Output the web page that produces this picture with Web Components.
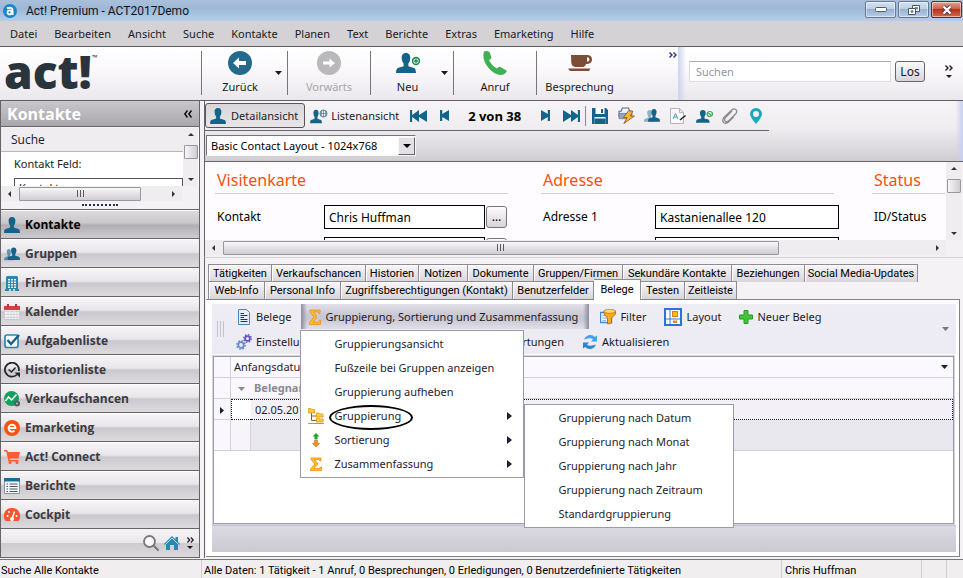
<!DOCTYPE html>
<html lang="de">
<head>
<meta charset="utf-8">
<title>Act! Premium - ACT2017Demo</title>
<style>
html, body { height: 100%; }
body { margin: 0; font: 11px/16px "Noto Sans", sans-serif; color: #1a1a22; background: #f4f2f5; overflow: hidden; }
</style>
</head>
<body>
<act-window></act-window>
<script>
const P = '<path fill="#13638a" d="M8 0C5.400 0 4.400 2 4.600 4.200 4.800 6.500 5.300 7.500 6.100 8.400V10.500L1.500 12C.6 12.300 .2 13.300 0 16H16C15.800 13.300 15.400 12.300 14.500 12L9.900 10.500V8.400C10.700 7.500 11.200 6.500 11.400 4.200 11.600 2 10.600 0 8 0Z"/>';
const ICONS = {
  app: ['0 0 14 14', '<circle cx="7" cy="7" r="7" fill="#1b86c4"/><circle cx="6.500" cy="8.400" r="2" fill="none" stroke="#fff" stroke-width="1.800"/><path d="M4 4.300Q9.500 2.600 9.500 6.500V11" fill="none" stroke="#fff" stroke-width="2"/>'],
  person: ['0 0 16 16', P],
  back: ['0 0 24 24', '<circle cx="12" cy="12" r="12" fill="#236a8b"/><path d="M5 12L11 6.500V10H18V14H11V17.500Z" fill="#fff"/>'],
  forward: ['0 0 24 24', '<circle cx="12" cy="12" r="12" fill="#b9b8ba"/><path d="M18 12L12.500 7.500V10.500H6V13.500H12.500V16.500Z" fill="#fff"/>'],
  neu: ['0 0 24 20', '<g transform="scale(1.25)">' + P + '</g><circle cx="20" cy="8" r="3.400" fill="#fff" stroke="#1c8e57" stroke-width="1.600"/><path d="M20 6V10M18 8H22" stroke="#1c8e57" stroke-width="1.400"/>'],
  phone: ['0 0 24 24', '<path fill="#3fb054" d="M1 0.500Q4-.5 6.500 1L8.500 6.500Q8.300 8 6 9Q8 14 14 17.500Q15.500 15.500 17 15.700L23.500 19.500Q24.500 21.500 20.500 23.500Q13 25.500 6 17.500Q-1.500 9 1 .5Z"/>'],
  cup: ['0 0 24 20', '<path fill="#7b4e35" d="M3 1H19Q24 1 24 6Q24 11 18 11Q17 14.500 14 14.500H8Q4 14.500 3.300 10ZM19 3.500V8.500Q21.500 8.500 21.500 6Q21.500 3.500 19 3.500ZM0 16H22.500L21 19H2Z" fill-rule="evenodd"/>'],
  more: ['0 0 8 6', '<path d="M0.500 .5L3 3L.5 5.500M4.500 .5L7 3L4.500 5.500" fill="none" stroke="currentColor" stroke-width="1.400"/>'],
  less: ['0 0 8 8', '<path d="M3.500 .5L.8 4L3.500 7.500M7.500 .5L4.800 4L7.500 7.500" fill="none" stroke="currentColor" stroke-width="1.300"/>'],
  down: ['0 0 8 4', '<path d="M0 0H8L4 4Z" fill="currentColor"/>'],
  up: ['0 0 8 4', '<path d="M0 4H8L4 0Z" fill="currentColor"/>'],
  right: ['0 0 4 8', '<path d="M0 0V8L4 4Z" fill="currentColor"/>'],
  left: ['0 0 4 8', '<path d="M4 0V8L0 4Z" fill="currentColor"/>'],
  list: ['0 0 18 16', '<g transform="scale(.75 .85) translate(0 2)">' + P + '</g><circle cx="13.500" cy="5.500" r="3.500" fill="#e9eef2" stroke="#5f7f90"/><path d="M10 5.500H17M13.500 2V9M11.500 3V8M15.500 3V8" stroke="#5f7f90" stroke-width=".7"/>'],
  first: ['0 0 16 12', '<path fill="#13638a" d="M0 0H2V5L8.500 0V5L16 0V12L8.500 7V12L2 7V12H0Z"/>'],
  prev: ['0 0 8 11', '<path fill="#13638a" d="M0 0H2V4L8 0V11L2 7V11H0Z"/>'],
  next: ['0 0 8 11', '<path fill="#13638a" d="M8 0H6V4L0 0V11L6 7V11H8Z"/>'],
  last: ['0 0 16 12', '<path fill="#13638a" d="M16 0H14V5L7.500 0V5L0 0V12L7.500 7V12L14 7V12H16Z"/>'],
  save: ['0 0 16 16', '<path fill="#13638a" d="M0 0H14L16 2V16H0Z"/><path fill="#fff" d="M3.500 0H12.500V6H3.500ZM2.500 9H13.500V16H2.500Z"/><path fill="#13638a" d="M9 1H11V5H9ZM2.500 10.500H13.500V16H2.500Z"/>'],
  quick: ['0 0 16 16', '<path d="M4 1H10L11 4H13V9H1V4H3Z" fill="#eef2fa" stroke="#54688f"/><path d="M1 6H10V11H1Z" fill="#93a4c4" stroke="#54688f" stroke-width=".6"/><path d="M10 3.500L5 10H8.500L5.500 15.500L15.500 8.500H11.500L14 4Z" fill="#f9b636" stroke="#8a5b16" stroke-width=".8"/>'],
  people: ['0 0 16 14', '<g opacity=".45" transform="translate(0 1) scale(.7 .8)">' + P + '</g><g transform="translate(4 0) scale(.75 .85)">' + P + '</g>'],
  note: ['0 0 16 16', '<path d="M.5 .5H9.500L13.500 4.500V15.500H.5ZM9.500 .5V4.500H13.500" fill="#fafafc" stroke="#b3b3b8"/><path d="M3 11L5.500 5.500L8 11M4 9H7" stroke="#4f98c2" fill="none"/><path d="M10 12L15.500 7.500" stroke="#222" stroke-width="1.600"/>'],
  call: ['0 0 16 14', '<g transform="translate(0 1) scale(.8)">' + P + '</g><circle cx="13" cy="5" r="2.500" fill="#fff" stroke="#35a84c" stroke-width="1.200"/><path d="M11.500 4L14.500 6.500" stroke="#35a84c"/>'],
  clip: ['0 0 16 16', '<path d="M10 3L3.500 9.500Q1.800 12 3.300 13.300Q5 14.500 7 12.500L14 5.500Q15.500 3 13.700 1.600Q12-.1 9.700 2L2 9.500Q-.3 12.500 1.600 14.500Q4 16.300 6.500 14L12 8.500" fill="none" stroke="#8b8a8e" stroke-width="1.300"/>'],
  pin: ['0 0 12 16', '<path fill="#18aab8" fill-rule="evenodd" d="M6 0A6 6 0 0 1 12 6Q12 9 6 16Q0 9 0 6A6 6 0 0 1 6 0ZM6 3A3 3 0 1 0 6 9A3 3 0 0 0 6 3Z"/>'],
  groups: ['0 0 16 16', '<g opacity=".6" transform="translate(0 3) scale(.6 .7)">' + P + '</g><g transform="translate(3.500 1.500) scale(.78)">' + P + '</g>'],
  firm: ['0 0 16 16', '<path fill="#2f86ab" d="M3 1H13L14 2V14H15V16H11V14H9V16H7V14H5V16H1V14H2V2Z"/><path d="M4 4H12V13H4Z" fill="#e8f2f7"/><path d="M4 6H12M4 8.500H12M4 11H12M6.500 4V13M9.500 4V13" stroke="#2f86ab"/>'],
  calendar: ['0 0 16 16', '<path fill="#f4f4f6" stroke="#c9c9cf" d="M.5 4H15.500V15.500H.5Z"/><path d="M1 7.500H15M1 10.500H15M1 13.500H15M4 5V15M7 5V15M10 5V15M13 5V15" stroke="#d3d3d8"/><path fill="#d23f44" d="M0 2H16V6H0Z"/><path fill="#b3333a" d="M3 0H5V3H3ZM11 0H13V3H11Z"/>'],
  task: ['0 0 16 16', '<rect x="1" y="2" width="13" height="12.500" rx="2" fill="#f5fafc" stroke="#2d85ae" stroke-width="1.700"/><path d="M3.500 7L7 11L15 2" fill="none" stroke="#12618a" stroke-width="2.400"/>'],
  history: ['0 0 16 16', '<path d="M13 12.500A7 7 0 1 1 14.800 9" fill="none" stroke="#26262a" stroke-width="1.800"/><path d="M10.500 10.500H16V15.500Z" fill="#26262a"/><path d="M4.500 7.500L7.500 10L11.500 5.500" fill="none" stroke="#26262a" stroke-width="1.500"/>'],
  chance: ['0 0 16 16', '<circle cx="7.500" cy="7.500" r="7.500" fill="#12a05a"/><path d="M1.500 10L4.500 6L7.500 9L12.500 3.500" fill="none" stroke="#fff" stroke-width="1.500"/><circle cx="13" cy="12.500" r="3" fill="#575b60"/><circle cx="13" cy="12.500" r="1" fill="#b9bcc0"/>'],
  emark: ['0 0 16 16', '<circle cx="8" cy="8" r="8" fill="#f9520f"/><path d="M4.500 8H11.500A3.500 3.500 0 1 0 10.500 10.700" fill="none" stroke="#fff" stroke-width="1.800"/>'],
  cart: ['0 0 16 14', '<path fill="#fb5c36" d="M0 0H3L4 2H16L14.500 8.500H5.500L5.800 10H14.500V11.500H4.500L2.200 1.500H0Z"/><circle cx="6" cy="12.500" r="1.500" fill="#fb5c36"/><circle cx="13" cy="12.500" r="1.500" fill="#fb5c36"/>'],
  report: ['0 0 16 16', '<path fill="#f6f9fb" stroke="#8a949c" d="M.5 1.500H15.500V15.500H.5Z"/><path fill="#1c6c98" d="M0 0H16V3.500H0Z"/><path d="M2.500 6H4M2.500 8.500H4M2.500 11H4M2.500 13.500H4M5.500 6H13.500M5.500 8.500H13.500M5.500 11H13.500M5.500 13.500H13.500" stroke="#50585f"/>'],
  gauge: ['0 0 16 14', '<path fill="#fb5530" d="M8 0A8 8 0 0 1 14.500 13H1.500A8 8 0 0 1 8 0Z"/><circle cx="3.500" cy="8" r="1" fill="#fff"/><circle cx="5" cy="4" r="1" fill="#fff"/><circle cx="12.500" cy="8" r="1" fill="#fff"/><path d="M8 11L10.500 3.500" stroke="#fff" stroke-width="1.400"/><circle cx="8" cy="11" r="2" fill="#fff"/>'],
  search: ['0 0 16 16', '<circle cx="6.500" cy="6.500" r="5.500" fill="#f8f8fa" stroke="#77777b" stroke-width="1.800"/><path d="M10.500 10.500L15.500 15.500" stroke="#77777b" stroke-width="2"/>'],
  home: ['0 0 16 14', '<path fill="#2b87ae" d="M8 0L11.500 3.500V1H14V6L16 8L15 9L14 8V14H10V9H6V14H2V8L1 9L0 8Z"/><path d="M1.500 8.500L8 2L14.500 8.500" fill="none" stroke="#e6f0f5" stroke-width=".8"/>'],
  doc: ['0 0 12 16', '<path d="M.5 .5H8.500L11.500 3.500V15.500H.5Z" fill="#e3f0fb" stroke="#4a84bd"/><path d="M2.500 4.500H6M2.500 6.500H9.500M2.500 8.500H6M2.500 10.500H9.500M2.500 12.500H9.500" stroke="#17375e"/>'],
  gears: ['0 0 16 16', '<circle cx="5" cy="11" r="2.800" fill="none" stroke="#5f8ed0" stroke-width="1.800"/><circle cx="5" cy="11" r="4.200" fill="none" stroke="#5f8ed0" stroke-width="1.500" stroke-dasharray="1.650 1.650"/><circle cx="11.500" cy="4.500" r="2.400" fill="none" stroke="#6657ba" stroke-width="1.800"/><circle cx="11.500" cy="4.500" r="3.700" fill="none" stroke="#6657ba" stroke-width="1.500" stroke-dasharray="1.450 1.450"/>'],
  sigma: ['0 0 12 14', '<path d="M1 1H11V4H10L9 2.500H4.500L8 7L4 11.500H9.500L10.500 10H11.500V13.500H.5V12L5 7L1 2.500Z" fill="#ffc21e" stroke="#f08a1c" stroke-width=".8"/>'],
  filter: ['0 0 16 16', '<path d="M.5 3.500H11.500V13.500H.5Z" fill="#f3f8ff" stroke="#4886d2" stroke-width="1.400"/><path d="M2.500 6.500H8M2.500 9H7M2.500 11.500H6" stroke="#8eb4e4"/><path d="M4 2V5L7.500 9V15L11.500 14V9L15.500 5V2Z" fill="#fbab1d" stroke="#a7630c" stroke-width=".8"/><ellipse cx="9.700" cy="2.300" rx="5.800" ry="2" fill="#ffd867" stroke="#a7630c" stroke-width=".6"/>'],
  layout: ['0 0 18 18', '<path d="M0 0H18V18H0Z" fill="#2b73d7"/><path d="M2 2H16V16H2Z" fill="#fff"/><path d="M6 2V16M2 11H16" stroke="#3379d9"/><rect x="8.500" y="3.500" width="5" height="5" fill="#ffbd19" stroke="#d8840f"/><rect x="9.500" y="13" width="3" height="1.500" fill="#ffbd19" stroke="#d8840f"/>'],
  plus: ['0 0 14 14', '<path d="M5 .5H9V5H13.500V9H9V13.500H5V9H.5V5H5Z" fill="#42c739" stroke="#249b27"/>'],
  refresh: ['0 0 16 16', '<path d="M2 5.500Q4 1 8.500 1Q11 1 12.800 3L15 1.500V7.500H9L11 5.300Q9.500 4 7.500 4.200Q4.500 4.500 2 5.500Z" fill="#41a4e8"/><path d="M14 10.500Q12 15 7.500 15Q5 15 3.200 13L1 14.500V8.500H7L5 10.700Q6.500 12 8.500 11.800Q11.500 11.500 14 10.500Z" fill="#2389d6"/>'],
  tree: ['0 0 16 16', '<path d="M3.500 5V12.500H9M3.500 8H9" fill="none" stroke="#7c642c"/><path d="M0 15.500H16" stroke="#9a9896"/><path d="M.5 .5H3L3.500 1.500H6.500V5H.5ZM8.500 5H11L11.500 6H15V9H8.500ZM8.500 10H11L11.500 11H15V14H8.500Z" fill="#ffce3c" stroke="#e6951c" stroke-width=".8"/>'],
  sort: ['0 0 8 14', '<path d="M4 0L7.500 3.500H5.500V6.500H2.500V3.500H.5Z" fill="#28a42a"/><path d="M4 14L7.500 10.500H5.500V7.500H2.500V10.500H.5Z" fill="#f4941d" stroke="#cf5a12" stroke-width=".6"/>'],
  min: ['0 0 12 6', '<rect x=".5" y=".5" width="11" height="4" rx="1" fill="#fff" stroke="#4c5b72"/>'],
  restore: ['0 0 12 10', '<path d="M4.500 .5H11.500V6.500H4.500Z" fill="#fff" stroke="#46556c"/><path d="M7 2.500H9.500V4H7Z" fill="#7f97b6" stroke="#46556c" stroke-width=".6"/><path d="M.5 3.500H7.500V9.500H.5Z" fill="#fff" stroke="#46556c"/><path d="M3 5.700H5V7.300H3Z" fill="#7f97b6" stroke="#46556c" stroke-width=".6"/>'],
  close: ['0 0 12 10', '<path d="M2.500 1.500L9.500 8.500M9.500 1.500L2.500 8.500" stroke="#4d3540" stroke-width="4"/><path d="M2.500 1.500L9.500 8.500M9.500 1.500L2.500 8.500" stroke="#fff" stroke-width="2.400"/>']
};

const RESET = `*{box-sizing:border-box}
button,input,select{font:inherit;color:inherit;margin:0;padding:0;border:0;background:none;border-radius:0;outline:0;min-width:0}
button{display:inline-flex;align-items:center;white-space:nowrap}`;

function define(name, render) {
  customElements.define(name, class extends HTMLElement {
    constructor() { super(); this.attachShadow({ mode: 'open' }); }
    connectedCallback() {
      const t = document.createElement('template');
      t.innerHTML = render(this);
      const own = document.createElement('style');
      own.textContent = RESET;
      this.shadowRoot.replaceChildren(own, t.content.cloneNode(true));
    }
  });
}
const at = (el, n, d = '') => el.getAttribute(n) ?? d;
const icon = (n, w, h = w) => `<act-icon name="${n}" w="${w}" h="${h}"></act-icon>`;

define('act-icon', el => {
  const [box, body] = ICONS[at(el, 'name')];
  return `<style>:host{display:inline-block;flex:none;width:${at(el, 'w')}px;height:${at(el, 'h')}px}svg{display:block;width:100%;height:100%}</style>
  <svg viewBox="${box}" preserveAspectRatio="none" aria-hidden="true">${body}</svg>`;
});

define('act-window', () => `<style>
:host{display:flex;flex-direction:column;height:100vh}
main{flex:1;min-height:0;display:grid;grid-template-columns:200px minmax(0,1fr);gap:4px}
</style>
<title-bar></title-bar><menu-bar></menu-bar><main-toolbar></main-toolbar>
<main><side-panel></side-panel><work-area></work-area></main>
<status-bar></status-bar>`);

define('title-bar', () => `<style>
:host{display:flex;align-items:center;height:21px;flex:none;padding:0 1px 0 3px;background:linear-gradient(#a9c0dc,#9db8d6 40%,#b5cde8);color:#10131c}
span{flex:1;margin-left:9px;font:12px/18px Roboto,sans-serif}
div{display:flex;gap:2px;align-self:flex-start;padding-top:1px}
button{width:31px;height:17px;justify-content:center;border:1px solid #66788f;border-radius:2px;background:linear-gradient(#d5e2f0,#bccfe4 45%,#98b2d0 50%,#b6cde6);box-shadow:inset 0 0 0 1px #ffffff80}
button:last-child{background:linear-gradient(#e6a093,#d2604b 45%,#b5311c 50%,#cf6a4c);border-color:#5c2b2b}
</style>${icon('app', 14)}<span>Act! Premium - ACT2017Demo</span>
<div><button aria-label="Minimieren">${icon('min', 12, 6)}</button><button aria-label="Wiederherstellen">${icon('restore', 12, 10)}</button><button aria-label="Schließen">${icon('close', 12, 10)}</button></div>`);

define('menu-bar', () => `<style>
:host{display:flex;align-items:center;height:26px;flex:none;padding:0 10px;gap:17px;background:#d4d2d5;border-bottom:1px solid #5f5f63}
</style>${['Datei', 'Bearbeiten', 'Ansicht', 'Suche', 'Kontakte', 'Planen', 'Text', 'Berichte', 'Extras', 'Emarketing', 'Hilfe'].map(t => `<button>${t}</button>`).join('')}`);

define('tool-button', el => `<style>
:host{display:flex;height:44px;flex:none;width:${at(el, 'size')}px;border-left:1px solid #77757a}
button{flex:1;flex-direction:column;justify-content:space-between;height:44px}
:host([off]) button{color:#a6a4aa}
i{display:flex;align-items:center;justify-content:center;height:24px}
:host([drop]) button:first-of-type{margin-right:9px}
.d{flex:0 0 18px;justify-content:center;margin-left:-18px}
</style><button><i><slot name="icon"></slot></i><slot></slot></button>${el.hasAttribute('drop') ? `<button class="d" aria-label="Mehr">${icon('down', 7, 4)}</button>` : ''}`);

define('main-toolbar', () => `<style>
:host{display:flex;height:54px;flex:none;background:linear-gradient(#fff,#fbf9fc 40%,#eae8ec);border-bottom:1px solid #5f5f63}
.logo{width:201px;height:53px;padding-left:4px;color:#29343c;font:800 46px/48px "Open Sans",sans-serif;white-space:nowrap;display:flex}
.logo sup{font:700 7px/8px "Open Sans",sans-serif;margin-top:7px}
nav{display:flex;padding-top:4px;flex:1;overflow:hidden}
.over{color:#2a2f86;align-self:flex-start;padding:5px 1px 0 0}
.search{display:flex;align-items:center;gap:4px;padding:0 8px 4px 11px;background:linear-gradient(90deg,#ccd2f0,#ebe9f600 8px)}
input{width:202px;height:21px;border:1px solid #dddbdf;border-top-color:#aaa8ad;background:#fff;padding:0 6px}
input::placeholder{color:#98969c;opacity:1}
.go{height:21px;width:30px;justify-content:center;border:1px solid #67666b;border-radius:3px;background:linear-gradient(#fbfafb,#d8d5d9);font-size:12px}
.end{flex-direction:column;gap:4px;margin-left:14px;width:12px}
</style>
<div class="logo">act!<sup>™</sup></div>
<nav>
<tool-button size="86" drop><act-icon slot="icon" name="back" w="24" h="24"></act-icon>Zurück</tool-button>
<tool-button size="83" off><act-icon slot="icon" name="forward" w="24" h="24"></act-icon>Vorwärts</tool-button>
<tool-button size="83" drop><act-icon slot="icon" name="neu" w="24" h="20"></act-icon>Neu</tool-button>
<tool-button size="83"><act-icon slot="icon" name="phone" w="24" h="24"></act-icon>Anruf</tool-button>
<tool-button size="86"><act-icon slot="icon" name="cup" w="24" h="18"></act-icon>Besprechung</tool-button>
</nav>
<button class="over" aria-label="Weitere Symbole">${icon('more', 8, 6)}</button>
<div class="search"><input aria-label="Suchen" placeholder="Suchen"><button class="go">Los</button>
<button class="end" aria-label="Optionen">${icon('more', 8, 6)}${icon('down', 6, 3)}</button></div>`);

define('scroll-bar', el => {
  const v = el.hasAttribute('vertical'), off = at(el, 'start', '0'), len = at(el, 'length', '14');
  return `<style>
:host{display:flex;flex:none;flex-direction:${v ? 'column' : 'row'};${v ? 'width' : 'height'}:15px;background:#efedf0;align-items:center;color:#333}
:host act-icon{margin:${v ? '5px 0' : '0 7px'}}
b{flex:none;${v ? `width:14px;height:${len}px;margin-top:${off}px` : `height:14px;width:${len};margin-left:${off}px`};border:1px solid #99979b;border-radius:1px;background:linear-gradient(${v ? '90deg' : '180deg'},#f7f6f8,#e3e1e5 50%,#cecdd2);display:flex;justify-content:center;align-items:center;gap:2px}
i{width:1px;height:7px;background:#5b5b60}
s{flex:1}
</style>${icon(v ? 'up' : 'left', v ? 6 : 3, v ? 3 : 6)}<b>${v ? '' : '<i></i><i></i><i></i>'}</b><s></s>${icon(v ? 'down' : 'right', v ? 6 : 3, v ? 3 : 6)}`;
});

define('nav-item', el => `<style>
:host{display:block;flex:none;height:29px;border-top:1px solid #656468}
button{width:100%;height:28px;gap:5px;padding:0 3px;border-top:1px solid #fff;background:linear-gradient(#f7f4f8,#e9e6ea 45%,#cac8cc 52%,#dedbdf);font:bold 12px/16px "Open Sans",sans-serif;color:#3b3a3f}
:host([active]) button{background:linear-gradient(#dcdadd,#c9c7ca 45%,#b0aeb2 52%,#cfccd1);color:#000}
</style><button>${icon(at(el, 'icon'), 16, +at(el, 'h', '16'))}<slot></slot></button>`);

define('side-panel', () => `<style>
:host{display:flex;flex-direction:column;min-height:0;border:solid #656468;border-width:0 1px 1px;background:#f3f1f4}
h1{margin:0;height:26px;flex:none;display:flex;align-items:center;justify-content:space-between;padding:0 7px 0 6px;font:bold 16px/24px "Open Sans",sans-serif;color:#fff;background:linear-gradient(#c9c7cb,#a9a7ab);border-bottom:1px solid #656468}
h1 button{color:#000}
.find{height:58px;flex:none;display:flex;margin-top:1px;padding-right:1px;background:#fff}
.body{flex:1;overflow:hidden}
h2{margin:0;height:24px;font:12px/24px "Open Sans",sans-serif;padding-left:10px;background:#efedf0;border-bottom:1px solid #bab8bc}
label{display:block;margin-left:13px;padding-top:4px}
select{appearance:none;display:block;width:100%;height:20px;margin-top:6px;padding:0 4px;border:1px solid #555;background:#fff}
.grip{height:8px;flex:none;display:flex;align-items:center;justify-content:center}
.grip i{width:36px;border-top:2px dotted #26304a}
nav{flex:1;display:flex;flex-direction:column;min-height:0}
.tools{flex:1;display:flex;align-items:center;justify-content:flex-end;gap:5px;padding-right:4px;border-top:1px solid #656468;background:linear-gradient(#f7f4f8,#eae7eb 48%,#cecbcf 52%,#dcd9dd)}
.tools button:last-child{flex-direction:column;gap:3px;width:10px}
scroll-bar[wide]{margin-right:17px}
</style>
<h1>Kontakte<button aria-label="Einklappen">${icon('less', 8)}</button></h1>
<div class="find"><div class="body"><h2>Suche</h2><label>Kontakt Feld:<select><option>Kontakt</option></select></label></div><scroll-bar vertical start="4" length="14"></scroll-bar></div>
<scroll-bar wide start="1" length="122px"></scroll-bar>
<div class="grip"><i></i></div>
<nav>
<nav-item icon="person" active>Kontakte</nav-item><nav-item icon="groups">Gruppen</nav-item><nav-item icon="firm">Firmen</nav-item>
<nav-item icon="calendar">Kalender</nav-item><nav-item icon="task">Aufgabenliste</nav-item><nav-item icon="history">Historienliste</nav-item>
<nav-item icon="chance">Verkaufschancen</nav-item><nav-item icon="emark">Emarketing</nav-item><nav-item icon="cart" h="14">Act! Connect</nav-item>
<nav-item icon="report">Berichte</nav-item><nav-item icon="gauge" h="14">Cockpit</nav-item>
<div class="tools"><button aria-label="Suchen">${icon('search', 16)}</button><button aria-label="Start">${icon('home', 16, 14)}</button><button aria-label="Mehr">${icon('more', 7, 6)}${icon('down', 6, 3)}</button></div>
</nav>`);

define('work-area', () => `<style>
:host{display:flex;flex-direction:column;min-width:0;min-height:0}
tab-area{flex:1;min-height:0}
</style><record-bar></record-bar><contact-form></contact-form><tab-area></tab-area>`);

define('record-bar', () => `<style>
:host{display:block;height:61px;flex:none;background:linear-gradient(90deg,#fff0 99%,#c9d0ee),linear-gradient(#f6f4f7,#efedf0 45%,#cfcdd1);border:solid #656468;border-width:0 0 1px 1px}
.row{display:inline-flex;align-items:center;height:30px;margin:0 0 4px;border-bottom:1px solid #67666a}
.view{height:25px;gap:5px;padding:0 6px 0 4px;border-radius:3px;border:1px solid transparent}
.on{border-color:#57565a;background:linear-gradient(#d8d6d9,#e8e6e9)}
.list{gap:3px;padding-right:5px}
.n{width:26px;justify-content:center}
strong{font:bold 13px/20px "Open Sans",sans-serif;color:#000;width:75px;text-align:center}
.t{width:26px;justify-content:center}
hr{width:1px;height:20px;border:0;background:#8a888c;margin:0 1px}
.combo{display:grid;width:210px;height:21px;margin-left:1px;background:#fff;border:1px solid;border-color:#77757a #f8f8f8 #f8f8f8 #77757a}
.combo>*{grid-area:1/1}
select{appearance:none;padding-left:4px;color:#000;line-height:18px}
.arr{justify-self:end;align-self:center;pointer-events:none;display:flex;align-items:center;justify-content:center;width:17px;height:18px;background:#e3e1e4;border:1px solid;border-color:#f8f8f8 #66656a #66656a #f8f8f8;color:#000}
</style>
<div class="row"><button class="view on">${icon('person', 16)}Detailansicht</button><button class="view list">${icon('list', 18, 16)}Listenansicht</button>
<button class="n" aria-label="Erster">${icon('first', 17, 12)}</button><button class="n" aria-label="Zurück">${icon('prev', 9, 11)}</button><strong>2 von 38</strong><button class="n" aria-label="Weiter">${icon('next', 9, 11)}</button><button class="n" aria-label="Letzter">${icon('last', 17, 12)}</button><hr>
<button class="t" aria-label="Speichern">${icon('save', 16)}</button><button class="t" aria-label="Schnelldruck">${icon('quick', 17)}</button><button class="t" aria-label="Kontakte">${icon('people', 16, 13)}</button><button class="t" aria-label="Notiz">${icon('note', 16)}</button><button class="t" aria-label="Anruf">${icon('call', 17, 14)}</button><button class="t" aria-label="Anhang">${icon('clip', 16)}</button><button class="t" aria-label="Karte">${icon('pin', 12, 16)}</button></div>
<div class="combo"><select aria-label="Layout"><option>Basic Contact Layout - 1024x768</option></select><span class="arr">${icon('down', 8, 4)}</span></div>`);

define('contact-form', () => `<style>
:host{display:grid;grid-template:78px 16px/minmax(0,1fr) 17px;height:95px;flex:none;border-left:1px solid #656468;background:#f3f1f4;font:12px/18px "Noto Sans",sans-serif;color:#000}
.f{background:#fffcff;overflow:hidden;display:grid;grid-template-columns:293px 298px minmax(0,1fr);gap:33px;padding:0 1px 0 10px;align-items:start}
h3{margin:0 0 11px;height:32px;padding:6px 2px 0;font:16px/25px "Noto Sans",sans-serif;color:#f9500c;border-bottom:1px solid #d0ced2}
.two h3{margin-right:5px}
p{display:flex;align-items:center;margin:0 0 8px;height:24px;gap:1px}
label{width:108px;padding-left:2px;flex:none}
.two label{width:113px}
input{width:161px;height:24px;border:1px solid #000;padding:0 4px;background:#fff}
.two input{width:184px}
button{width:21px;height:22px;justify-content:center;border:1px solid #77757a;border-radius:3px;background:linear-gradient(#fdfcfd,#d7d4d8)}
</style>
<div class="f">
<section><h3>Visitenkarte</h3><p><label for="k">Kontakt</label><input id="k" value="Chris Huffman"><button aria-label="Kontakt bearbeiten">…</button></p><p><label for="c"></label><input id="c" aria-label="Firma"><button aria-label="Firma bearbeiten"></button></p></section>
<section class="two"><h3>Adresse</h3><p><label for="a">Adresse 1</label><input id="a" value="Kastanienallee 120"></p><p><label for="b"></label><input id="b" aria-label="Adresse 2"></p></section>
<section><h3>Status</h3><p><label>ID/Status</label></p></section>
</div>
<scroll-bar vertical start="4" length="14"></scroll-bar>
<scroll-bar start="1" length="75%"></scroll-bar>`);

define('tab-button', el => `<style>
:host{display:block;flex:none;height:18px;width:${at(el, 'size')}px}
button{width:100%;height:18px;justify-content:center;border:solid #8c8b92;border-width:1px 1px 0 0;background:linear-gradient(#f8f6f9,#d7d5d9);font:11px/16px Roboto,sans-serif;color:#000;box-shadow:inset 1px 1px #fff}
:host([first]) button{border-left-width:1px}
:host([active]){height:21px;margin-bottom:-1px;z-index:1}
:host([active]) button{height:21px;background:#fff}
</style><button><slot></slot></button>`);

define('tab-area', () => `<style>
:host{display:flex;flex-direction:column;padding:6px 3px 1px 1px;background:#f4f2f5;border-left:1px solid #656468;border-top:1px solid #d5d3d7}
.tabs{display:flex;flex:none;height:18px;align-items:flex-end;padding-left:2px}
.tabs+.tabs{height:17px}
.pane{flex:1;min-height:0;display:flex;flex-direction:column;border:1px solid #83828a;border-left:0;background:#fff;padding:4px 3px 4px 6px}
doc-grid{flex:1;min-height:0}
footer{height:27px;flex:none;background:linear-gradient(#dbd9e1,#cbc9d3);border-top:1px solid #c3c1cd}
</style>
<div class="tabs"><tab-button first size="64">Tätigkeiten</tab-button><tab-button size="94">Verkaufschancen</tab-button><tab-button size="53">Historien</tab-button><tab-button size="49">Notizen</tab-button><tab-button size="66">Dokumente</tab-button><tab-button size="89">Gruppen/Firmen</tab-button><tab-button size="109">Sekundäre Kontakte</tab-button><tab-button size="73">Beziehungen</tab-button><tab-button size="113">Social Media-Updates</tab-button></div>
<div class="tabs"><tab-button first size="57">Web-Info</tab-button><tab-button size="76">Personal Info</tab-button><tab-button size="172">Zugriffsberechtigungen (Kontakt)</tab-button><tab-button size="81">Benutzerfelder</tab-button><tab-button active size="47">Belege</tab-button><tab-button size="44">Testen</tab-button><tab-button size="52">Zeitleiste</tab-button></div>
<div class="pane"><doc-toolbar></doc-toolbar><doc-grid></doc-grid><footer></footer></div>`);

define('doc-toolbar', () => `<style>
:host{display:grid;grid-template-columns:24px minmax(0,1fr) 20px;height:50px;flex:none;background:linear-gradient(#efedf4,#eceaf2);position:relative;z-index:2;align-items:center}
.g{display:flex;gap:2px;padding-left:5px}.g i{width:1px;height:16px;background:#c4c2cc}
.r{display:flex;height:25px;align-items:center}
.r button{height:25px;gap:4px;flex:none}
.ic{width:16px;display:flex;justify-content:center}
.open{position:relative;display:flex;margin:0 11px 0 10px;width:288px}
.open>button{width:100%;padding-left:8px;background:linear-gradient(90deg,#8d8b9d,#8d8b9d00 6px,#8d8b9d00 282px,#8d8b9d),linear-gradient(#e2e0e8,#c9c7d3 45%,#c9c7d3 60%,#e0dee6)}
.b{margin-left:18px}
.far{margin-left:162px}
.m{color:#777684;justify-self:end;padding-right:7px}
.pop{position:absolute;left:-1px;top:26px}
</style>
<div class="g"><i></i><i></i><i></i></div>
<div><div class="r"><button><span class="ic">${icon('doc', 12, 16)}</span>Belege</button>
<div class="open"><button>${icon('sigma', 12, 16)}Gruppierung, Sortierung und Zusammenfassung</button><drop-menu class="pop"></drop-menu></div>
<button>${icon('filter', 16)}Filter</button><button class="b">${icon('layout', 18)}Layout</button><button class="b">${icon('plus', 14)}Neuer Beleg</button></div>
<div class="r"><button>${icon('gears', 16)}Einstellungen</button><button class="far">Auswertungen</button><button class="b">${icon('refresh', 16)}Aktualisieren</button></div></div>
<button class="m" aria-label="Weitere">${icon('down', 7, 4)}</button>`);

define('menu-row', el => `<style>
:host{display:block;position:relative;height:24px}
button{width:100%;height:24px}
i{width:30px;display:flex;justify-content:center;flex:none}
.t{flex:1;text-align:left;padding-left:3px}
.arrow{margin-right:11px}
.ring{position:absolute;left:28px;top:1px;width:84px;height:25px;border:2px solid #000;border-radius:50%;pointer-events:none}
</style><button><i>${at(el, 'icon') ? icon(at(el, 'icon'), +at(el, 'w', '16'), +at(el, 'h', '16')) : ''}</i><span class="t"><slot></slot></span>${el.hasAttribute('more') ? `<span class="arrow">${icon('right', 5, 8)}</span>` : ''}</button>
${el.hasAttribute('marked') ? '<span class="ring"></span>' : ''}<slot name="sub"></slot>`);

define('drop-menu', () => `<style>
:host{display:block;width:224px;padding:1px 0;border:1px solid #9b9aaa;background:#fff;color:#1e1c2e}
.sub{position:absolute;left:223px;top:0;width:210px;padding:1px 0;border:1px solid #9b9aaa;background:#fff}
</style>
<menu-row>Gruppierungsansicht</menu-row><menu-row>Fußzeile bei Gruppen anzeigen</menu-row><menu-row>Gruppierung aufheben</menu-row>
<menu-row icon="tree" more marked>Gruppierung<div class="sub" slot="sub"><menu-row>Gruppierung nach Datum</menu-row><menu-row>Gruppierung nach Monat</menu-row><menu-row>Gruppierung nach Jahr</menu-row><menu-row>Gruppierung nach Zeitraum</menu-row><menu-row>Standardgruppierung</menu-row></div></menu-row>
<menu-row icon="sort" w="8" h="14" more>Sortierung</menu-row><menu-row icon="sigma" w="12" h="14" more>Zusammenfassung</menu-row>`);

define('doc-grid', () => `<style>
:host{display:block;margin:2px 2px 1px 1px;border:1px solid #9b9aaa;background:#fff;box-shadow:0 0 0 1px #d6d4de}
table{width:100%;border-collapse:separate;border-spacing:0;table-layout:fixed;color:#1e1c2e}
td,th{padding:0;height:21px;line-height:16px;font-weight:400;text-align:left;border-bottom:1px solid #d2d0da;white-space:nowrap}
tr>:first-child{border-right:1px solid #d2d0da;text-align:center;background:#faf8fc}
th{background:#fbf9fd}
td.in{text-align:center;background:#faf8fc}
td act-icon{vertical-align:middle}
td.in act-icon{color:#8a8994}
th div{display:flex;justify-content:space-between;align-items:center;padding:0 5px 0 3px}
.grp{color:#8a8994;font-weight:bold;padding-left:3px;background:#faf8fc}
.data td:not(:first-child){border-top:1px dotted #1b1930;border-bottom:1px dotted #1b1930}
.data td:last-child{border-right:1px dotted #1b1930}
.data td.in{border-left:1px dotted #1b1930;background:#fff}
.data td.v{padding-left:4px;background:#f3f1f7}
.foot td{height:31px}
.foot td.v{background:#eae8ef}
.foot td:nth-child(2){background:#f7f5fa;border-right:1px solid #d2d0da}
</style>
<table><colgroup><col style="width:17px"><col style="width:20px"><col></colgroup>
<tr><th></th><th colspan="2"><div>Anfangsdatum${icon('down', 7, 4)}</div></th></tr>
<tr><td></td><td class="in">${icon('down', 7, 4)}</td><td class="grp">Belegname</td></tr>
<tr class="data"><td>${icon('right', 4, 7)}</td><td class="in"></td><td class="v">02.05.2017</td></tr>
<tr class="foot"><td></td><td></td><td class="v"></td></tr></table>`);

define('status-bar', () => `<style>
:host{display:flex;align-items:center;height:19px;flex:none;margin-top:1px;border-top:1px solid #77757a;background:#f1eeef;color:#000;font:11px/16px Roboto,sans-serif;white-space:nowrap}
span{padding:3px 0 0 3px;height:19px;border-right:1px solid #cfcdd0}
.a{width:202px;padding-left:1px}.b{flex:1;padding-left:2px}.c{width:140px}.d{width:25px}.e{width:16px;border:0}
</style><span class="a">Suche Alle Kontakte</span><span class="b">Alle Daten: 1 Tätigkeit - 1 Anruf, 0 Besprechungen, 0 Erledigungen, 0 Benutzerdefinierte Tätigkeiten</span><span class="c">Chris Huffman</span><span class="d"></span><span class="e"></span>`);
</script>
</body>
</html>
